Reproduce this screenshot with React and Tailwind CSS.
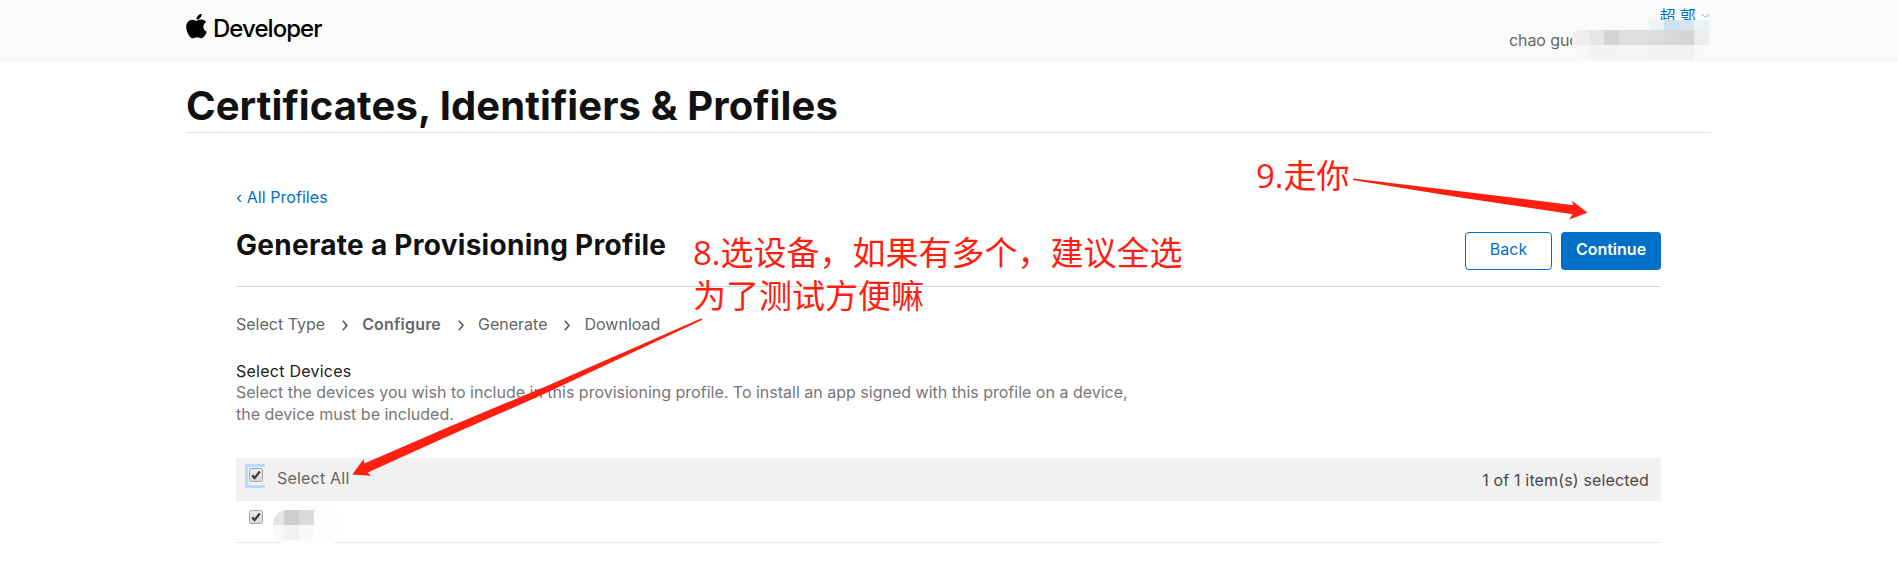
import React from 'react';
import { FaApple } from 'react-icons/fa';

const steps = ['Select Type', 'Configure', 'Generate', 'Download'];

function Mosaic({ cells, cols, className }) {
  return (
    <div className={`absolute grid auto-rows-[15px] overflow-hidden ${cols} ${className}`}>
      {cells.map((color, i) => (
        <div key={i} style={{ backgroundColor: color }} />
      ))}
    </div>
  );
}

function Checkbox() {
  return (
    <svg className="block h-[14px] w-[14px]" viewBox="0 0 14 14">
      <defs>
        <linearGradient id="box" x1="0" y1="0" x2="0" y2="1">
          <stop offset="0" stopColor="#eeeeee" />
          <stop offset="1" stopColor="#d9d9d9" />
        </linearGradient>
      </defs>
      <rect x="0.5" y="0.5" width="13" height="13" rx="2" fill="url(#box)" stroke="#a3a3a3" />
      <path d="M3.2 7.4 5.6 10 10.8 3.6" fill="none" stroke="#3c3c3c" strokeWidth="2.3" />
    </svg>
  );
}

function Header() {
  return (
    <header className="relative h-[62px] bg-[#fafafa]">
      <div className="mx-[186px] flex justify-between">
        <div className="flex pt-[12px] text-black">
          <FaApple className="h-[28px] w-[21px]" />
          <span className="ml-[6px] mt-[2px] text-[24px] font-medium leading-[30px] tracking-[-0.95px]">Developer</span>
        </div>
        <div className="flex flex-col items-end">
          <div className="flex h-[20px] items-start gap-[5px] text-[#0070c9]">
            <span className="pt-[4px] font-['Noto_Sans_CJK_SC',sans-serif] text-[16px] leading-[22px] tracking-[0.3px]">超 郭</span>
            <svg className="mr-[2px] mt-[14px] h-[4px] w-[9px]" viewBox="0 0 9 4">
              <path d="M0.5 0.5 4.5 3 8.5 0.5" fill="none" stroke="#8fbde3" />
            </svg>
          </div>
          <div className="mr-[100px] mt-[9px] w-[103px] text-[16px] leading-[22px] tracking-[-0.1px] text-[#666]">chao guo</div>
        </div>
      </div>
      <Mosaic
        cols="grid-cols-[15px_15px_15px_15px]"
        className="left-[1649px] top-[20px] h-[10px]"
        cells={['#eef2fa', '#d0e1f1', '#d8e4f1', '#eef1f7']}
      />
      <Mosaic
        cols="grid-cols-[17px_15px_15px_15px_15px_15px_15px_15px_15px]"
        className="left-[1572px] top-[30px] rounded-l-[8px] rounded-bl-[16px]"
        cells={[
          '#eeeeee', '#e7e8e6', '#d3d5d4', '#dfdfdf', '#dfdfdf', '#dcdddb', '#d8d9d8', '#d5d6d4', '#ededef',
          '#f7f7f7', '#f4f4f4', '#f4f4f4', '#f5f5f5', '#f5f5f5', '#f2f2f2', '#f2f2f2', '#f2f2f2', '#f9f9f9',
        ]}
      />
    </header>
  );
}

function Breadcrumbs() {
  return (
    <div className="flex items-center text-[16px] leading-[22px] text-[#666]">
      {steps.map((step, i) => (
        <React.Fragment key={step}>
          {i > 0 && (
            <svg className="ml-[17px] mr-[14px] mt-[3px] h-[11px] w-[6px]" viewBox="0 0 6 11">
              <path d="M0.8 0.8 5 5.5 0.8 10.2" fill="none" stroke="#555" strokeWidth="1.5" />
            </svg>
          )}
          <span className={step === 'Configure' ? 'font-semibold tracking-[0.2px]' : ''}>{step}</span>
        </React.Fragment>
      ))}
    </div>
  );
}

function DeviceTable() {
  return (
    <div className="mt-[33px]">
      <div className="flex h-[43px] items-start bg-[#f1f1f1] pl-[9px] pr-[12px]">
        <div className="mt-[6px] h-[24px] w-[20px] border-y-[3px] border-l-[3px] border-[#b9daf9] pl-px pt-px">
          <Checkbox />
        </div>
        <span className="ml-[12px] mt-[9px] text-[16px] leading-[22px] tracking-[0.2px] text-[#666]">Select All</span>
        <span className="ml-auto mt-[11px] text-[16px] leading-[22px] tracking-[0.15px] text-[#494949]">
          1 of 1 item(s) selected
        </span>
      </div>
      <div className="relative h-[42px] border-b border-[#e9e9e9] pl-[13px] pt-[9px]">
        <Checkbox />
        <div className="absolute left-[37px] top-[4px] h-[40px] w-[68px] rounded-[16px] bg-[#fdfdfd]" />
        <Mosaic
          cols="grid-cols-[11px_15px_15px]"
          className="left-[37px] top-[9px] rounded-l-[14px]"
          cells={['#e6e3e1', '#cdced0', '#dadbdd', '#f6f8f7', '#f3f2f1', '#f8faf9']}
        />
      </div>
    </div>
  );
}

function Annotations() {
  return (
    <>
      <div className="absolute left-[693px] top-[231px] whitespace-nowrap font-['Open_Sans','Noto_Sans_CJK_SC',sans-serif] text-[33px] leading-[43px] text-[#ff1e10]">
        8.选设备，如果有多个，建议全选
        <br />
        为了测试方便嘛
      </div>
      <div className="absolute left-[1256px] top-[154px] whitespace-nowrap font-['Open_Sans','Noto_Sans_CJK_SC',sans-serif] text-[33px] leading-[43px] text-[#ff1e10]">
        9.走你
      </div>
      <svg className="absolute left-0 top-0 h-[567px] w-[1898px]" viewBox="0 0 1898 567" fill="#ff1e10">
        <path d="M701.5 318.3 702 320 545 393.6 445 437.6 367.7 472.6 371 475.8 352.3 474.5 363.5 459.2 364.3 463.6 445 428.4 545 386.8Z" />
        <path d="M1353 178.4 1462 191.4 1573.3 205.2 1571.8 200.5 1587.5 212.7 1569.2 219.5 1572.5 214.3 1462 197.8 1353 180Z" />
      </svg>
    </>
  );
}

export default function App() {
  return (
    <div className="relative h-[567px] overflow-hidden bg-white font-['Inter',sans-serif] text-[#111]">
      <Header />
      <main className="mx-[186px] w-[1525px]">
        <h1 className="h-[71px] border-b border-[#e3e3e3] pt-[18px] text-[40px] font-bold leading-[51px] tracking-[0.1px]">
          Certificates, Identifiers &amp; Profiles
        </h1>
        <div className="mx-[50px] pt-[53px]">
          <a className="block text-[16px] leading-[22px] tracking-[0.05px] text-[#0070c9]">‹ All Profiles</a>
          <div className="flex h-[79px] items-start justify-between border-b border-[#d6d6d6]">
            <h2 className="mt-[19px] text-[28px] font-bold leading-[36px] tracking-[0.28px]">Generate a Provisioning Profile</h2>
            <div className="mt-[24px] flex gap-[9px] text-[16px]">
              <button className="h-[38px] w-[87px] rounded-[4px] border border-[#0070c9] pb-[4px] text-[#0070c9]">Back</button>
              <button className="h-[38px] w-[100px] rounded-[4px] bg-[#0070c9] pb-[4px] font-semibold text-white">Continue</button>
            </div>
          </div>
          <div className="pt-[26px]">
            <Breadcrumbs />
          </div>
          <div className="mt-[25px] text-[16px] leading-[22px]">
            <div className="h-[21px] tracking-[0.25px] text-[#222]">Select Devices</div>
            <p className="text-[#777]">
              Select the devices you wish to include in this provisioning profile. To install an app signed with this profile on a device,
              <br />
              the device must be included.
            </p>
          </div>
          <DeviceTable />
        </div>
      </main>
      <Annotations />
    </div>
  );
}
